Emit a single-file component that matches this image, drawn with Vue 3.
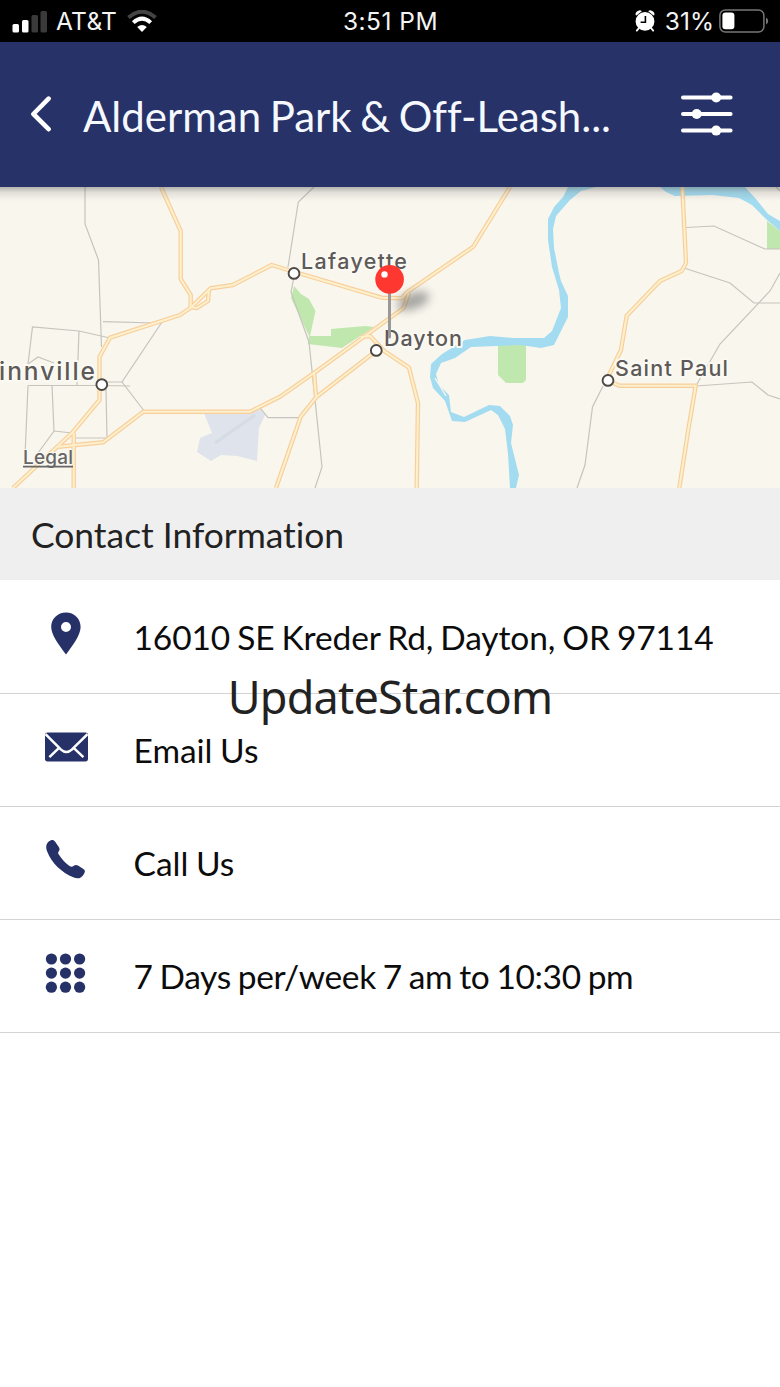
<template>
  <div class="screen">
    <div class="status-bar">
      <div class="status-left">
        <svg class="signal" viewBox="0 0 36 24" width="36" height="24">
          <rect x="0.5" y="15" width="6.5" height="8.5" rx="1.6" fill="#fff" />
          <rect x="10" y="11" width="6.5" height="12.5" rx="1.6" fill="#fff" />
          <rect x="19.5" y="6" width="6.5" height="17.5" rx="1.6" fill="#3a3a3a" />
          <rect x="28.5" y="2" width="6.5" height="21.5" rx="1.6" fill="#3a3a3a" />
        </svg>
        <span class="carrier">AT&amp;T</span>
        <svg class="wifi" viewBox="0 0 30 22" width="30" height="22" fill="none">
          <path d="M1.5 7.6 Q15 -4.2 28.5 7.6" stroke="#444" stroke-width="4" />
          <path d="M6.3 12.6 Q15 4.6 23.7 12.6" stroke="#fff" stroke-width="4" />
          <path d="M10.2 17 Q15 12.8 19.8 17 L15 22 Z" fill="#fff" />
        </svg>
      </div>
      <span class="time">3:51 PM</span>
      <div class="status-right">
        <svg class="alarm" viewBox="0 0 20 22" width="20" height="22">
          <path d="M0.6 5 Q0 1.5 4 0.4 Q6 0.2 6.8 1.2 L1.4 5.6 Z M19.4 5 Q20 1.5 16 0.4 Q14 0.2 13.2 1.2 L18.6 5.6 Z" fill="#fff" />
          <path d="M4 18 L1.8 20.6 M16 18 L18.2 20.6" stroke="#fff" stroke-width="1.8" stroke-linecap="round" />
          <circle cx="10" cy="11.4" r="9.4" fill="#fff" />
          <path d="M10.4 6 V12.2 H5.6" fill="none" stroke="#000" stroke-width="1.6" />
        </svg>
        <span class="percent">31%</span>
        <svg class="battery" viewBox="0 0 50 24" width="50" height="24">
          <rect x="0.9" y="0.9" width="44" height="22.2" rx="5.5" fill="none" stroke="#777" stroke-width="1.5" />
          <rect x="3.4" y="3.6" width="12" height="16.6" rx="3" fill="#fff" />
          <path d="M47 8.4 Q49.2 9.4 49.2 12 Q49.2 14.6 47 15.6 Z" fill="#777" />
        </svg>
      </div>
    </div>

    <header class="app-header">
      <svg class="back" viewBox="0 0 22 36" width="22" height="36">
        <path d="M18.6 2.6 L3.4 18 L18.6 33.2" fill="none" stroke="#fff" stroke-width="4.6" stroke-linecap="round" stroke-linejoin="round" />
      </svg>
      <h1 class="title">Alderman Park &amp; Off-Leash...</h1>
      <svg class="filters" viewBox="0 0 52 44" width="52" height="44">
        <g stroke="#fff" stroke-width="4" stroke-linecap="round">
          <path d="M2 5.5 H49.6 M2 22 H49.6 M2 38.6 H49.6" />
        </g>
        <g fill="#fff">
          <circle cx="35.2" cy="5.5" r="5" />
          <circle cx="15.7" cy="22" r="5" />
          <circle cx="35.2" cy="38.6" r="5" />
        </g>
      </svg>
    </header>

    <svg class="map" viewBox="0 0 780 301" width="780" height="301">
      <defs>
        <linearGradient id="headerShade" x1="0" y1="0" x2="0" y2="1">
          <stop offset="0" stop-color="#555" stop-opacity="0.42" />
          <stop offset="0.4" stop-color="#555" stop-opacity="0.14" />
          <stop offset="1" stop-color="#555" stop-opacity="0" />
        </linearGradient>
        <filter id="soft" x="-50%" y="-50%" width="200%" height="200%">
          <feGaussianBlur stdDeviation="5" />
        </filter>
      </defs>
      <rect width="780" height="301" fill="#f9f6ee" />

      <!-- airfield -->
      <path d="M204 226 L244 227 L258 221 L265 228 L259 241 L257 274 L237 269 L221 268 L211 274 L197 265 L200 251 L212 246 Z" fill="#dfe3eb" />
      <path d="M215 256 L255 228" stroke="#d6dce5" stroke-width="3" />

      <path v-for="d in parks" :key="d" :d="d" fill="#c0e7ae" />
      <path v-for="d in rivers" :key="d" :d="d" fill="#a3dcf0" />
      <path d="M435 191 L440 199 L446 209" fill="none" stroke="#f9f6ee" stroke-width="1.4" />

      <g fill="none" stroke="#c6c4be" stroke-width="1.2">
        <path v-for="d in lanes" :key="d" :d="d" />
      </g>
      <g fill="none" stroke="#f8cf9c" stroke-width="4.4" stroke-linejoin="round">
        <path v-for="d in roads" :key="d" :d="d" />
      </g>
      <g fill="none" stroke="#fdf0cc" stroke-width="2" stroke-linejoin="round">
        <path v-for="d in roads" :key="d" :d="d" />
      </g>

      <g v-for="t in towns" :key="t.name">
        <circle :cx="t.cx" :cy="t.cy" r="5.4" fill="#fff" stroke="#4c4846" stroke-width="1.9" />
        <text class="town" :class="{ large: t.large }" :x="t.x" :y="t.y" :textLength="t.w">{{ t.name }}</text>
      </g>
      <text class="legal" x="23" y="277" textLength="50">Legal</text>
      <path d="M23 279.6 H73" stroke="#666" stroke-width="1.6" />

      <!-- pin -->
      <ellipse cx="413" cy="114" rx="17" ry="8" transform="rotate(-20 413 114)" fill="#555" opacity="0.5" filter="url(#soft)" />
      <path d="M389.5 104 V150" stroke="#999" stroke-width="3" stroke-linecap="round" />
      <circle cx="389.6" cy="92.4" r="14.3" fill="#fe3830" />
      <circle cx="384.5" cy="87.4" r="3.2" fill="#fff" />

      <rect width="780" height="14" fill="url(#headerShade)" />
    </svg>

    <h2 class="section-title">Contact Information</h2>

    <ul class="contact-list">
      <li v-for="item in contacts" :key="item.icon" class="contact-row">
        <svg class="row-icon" viewBox="0 0 44 44" width="44" height="44">
          <template v-if="item.icon === 'pin'">
            <path fill-rule="evenodd" d="M22 0.5 C13.6 0.5 7.2 6.8 7.2 15 C7.2 23 15 33 22 42.5 C29 33 36.6 23 36.6 15 C36.6 6.8 30.4 0.5 22 0.5 Z M22 10 A5 5 0 1 1 22 20 A5 5 0 1 1 22 10 Z" fill="#263168" />
          </template>
          <template v-else-if="item.icon === 'mail'">
            <rect x="1" y="7.4" width="43" height="29" rx="2.6" fill="#263168" />
            <path d="M1.5 9.2 L17 24.6 Q22.4 29.4 27.8 24.6 L43.5 9.2 M15 22.8 L5.4 32.2 M29.6 22.8 L39.4 32.2" fill="none" stroke="#fff" stroke-width="2.5" />
          </template>
          <template v-else-if="item.icon === 'phone'">
            <path d="M6.5 2.4 C8.6 1.6 9.8 2 11 3.6 L14.6 8.8 C15.8 10.6 15.9 11.8 14.8 13.2 C13.8 14.5 14 15.2 14.8 16.5 C17.8 21.3 21 24.8 25.5 28 C27 29 28.2 29 29.5 28 C31 26.8 32.4 26.7 34 27.6 L39.4 31 C41.2 32.2 41.3 33.4 40.2 35.4 C37.6 40 34.4 41.4 29.8 39.6 C17.4 34.6 7.6 25 3.2 13.6 C1.2 8.4 2.4 4.2 6.5 2.4 Z" fill="#263168" />
          </template>
          <template v-else>
            <circle v-for="n in 9" :key="n" :cx="7.4 + ((n - 1) % 3) * 14.1" :cy="8 + Math.floor((n - 1) / 3) * 14.1" r="5.6" fill="#263168" />
          </template>
        </svg>
        <span class="row-text" :class="item.icon">{{ item.text }}</span>
      </li>
    </ul>

    <div class="watermark">UpdateStar.com</div>
  </div>
</template>

<script setup>
const contacts = [
  { icon: "pin", text: "16010 SE Kreder Rd, Dayton, OR 97114" },
  { icon: "mail", text: "Email Us" },
  { icon: "phone", text: "Call Us" },
  { icon: "hours", text: "7 Days per/week 7 am to 10:30 pm" },
];

const towns = [
  { name: "Lafayette", cx: 294, cy: 86.4, x: 301, y: 82, w: 106 },
  { name: "Dayton", cx: 376.3, cy: 163.4, x: 384, y: 159, w: 78 },
  { name: "Saint Paul", cx: 608, cy: 193.4, x: 615, y: 189, w: 113 },
  { name: "innville", cx: 101.8, cy: 197.6, x: -1, y: 193, w: 96, large: true },
];

// highways
const roads = [
  "M161 0 L180.7 44 V92 L190.7 108 V120",
  "M209 102 L208 114 L197 121 L190.7 120",
  "M13 301 L71.7 246.3 L99.5 213 V169.7 L110 150.7 L180 128 L190.7 120.7 L210.7 101.3 L233 98 L271.7 78 L288 83 L381.7 110.7 L401.7 111.3 L407 105.3 L473.3 59.7 L510 0",
  "M409 106 L403.3 121.3 L315 185.3 L280 209.7 L250 224.7 H143.3 L103.3 255.3 L58.3 259.7",
  "M361 150 L370 149 L385 164.7 L409 180.7 L418 216.3 L416.7 301",
  "M375 164.7 L316.7 209.7 L300.7 229.7 L276 301",
  "M314 185.3 L316 209.7",
  "M73.7 246 V301",
  "M682.3 0 L686 76.3 L681.7 84 L660 94 L626.7 128.7 L621 163 L608 190",
  "M608 193.7 L619.3 198.7 H695.7 L688 244.7 L679.3 301",
];

// local roads
const lanes = [
  "M85 0 V37 L98.5 73 L101.5 160",
  "M103 134.7 L155 136 M162 135 L122 195 L145 225",
  "M28 177 L32.5 140 L79 144 L110 151 M79 144 L77 198",
  "M28 177 L38 170 L54 176",
  "M28 198.5 H101 L130 199 M108 195 H122",
  "M28 198.5 L25 269 M52 198.5 L54 244 L38 266 M54 244 L72 246",
  "M106 202 L107 251 H75",
  "M314 0 L298.3 15 L288 80 M294 90 L291 105 L309 155 L322 280 L315 301",
  "M260 221 L268 230.6 H300",
  "M686 40.5 L714 39 L765 62 H780",
  "M684 81 L730 96 L754 116 H780 M780 86 L770 104 L720 157 L697 197",
  "M696 199 L752 195 L768 208 L780 212",
  "M603 199 L592.5 220 L585 278 L577 301",
  "M776 0 L780 4",
];

const parks = [
  "M294 99 L301 107 L309 112 L315.5 124 L310 149 L331 149 V142 L365 139 L374 140 L342 161 L308 157 L309 149 L291 111 Z",
  "M498 157 H526 V193 L523 196 H506 L498 188 Z",
  "M767 34 L780 44 V62 H767 Z",
];

const rivers = [
  "M568 0 H596 L581 4 L570 13 L556 29 L553 42 L554 61 L559 86 L561 94 L568 109 V130 L554 158 L541 161 L520 158 L471 160 L455 171 L441 176 L436 187 L439 198 L449 208 L451 225 L464 230 L489 218 L500 219 L510 229 L513 238 L511 256 L519 288 L516 301 H510 L508 267 L505 242 L498 228 L491 223 L465 235 L452 234 L445 214 L433 201 L430 190 L431 177 L442 167 L465 153 L490 149 L514 151 L544 151 L552 144 L561 121 L559 103 L552 80 L548 53 L548 32 L554 20 L563 10 Z",
  "M660 0 H745 L756 12 L768 27 L780 34 V44 L767 33 L752 18 L739 11 L713 8 L675 9 L666 5 Z",
];
</script>

<style scoped>
.screen {
  position: relative;
  display: flex;
  flex-direction: column;
  width: 780px;
  height: 1387px;
  overflow: hidden;
  background: #fff;
  font-family: Lato, sans-serif;
  font-variant-ligatures: none;
}

.status-bar {
  display: grid;
  grid-template-columns: 1fr auto 1fr;
  align-items: center;
  flex: none;
  height: 42px;
  padding: 0 11px 1px 12px;
  box-sizing: border-box;
  background: #000;
  color: #f4f4f4;
  font-family: Inter, sans-serif;
  font-size: 24.5px;
  line-height: 40px;
}

.status-left,
.status-right {
  display: flex;
  align-items: center;
}

.status-right {
  justify-content: flex-end;
}

.carrier {
  margin-left: 8px;
  letter-spacing: 0.3px;
}

.time {
  letter-spacing: 0.5px;
}

.wifi {
  margin-left: 10px;
}

.percent {
  margin: 0 5px 0 10px;
}

.app-header {
  display: flex;
  align-items: center;
  flex: none;
  height: 145px;
  padding: 0 47px 1px 30px;
  box-sizing: border-box;
  background: #273268;
}

.title {
  flex: 1;
  margin: 3px 0 0 31px;
  color: #f5f9ff;
  font-size: 42px;
  font-weight: 400;
  line-height: 50px;
  word-spacing: -2.2px;
  white-space: nowrap;
}

.map {
  display: block;
  flex: none;
}

.town,
.legal {
  fill: #5d5a58;
  stroke: #fbf9f3;
  stroke-width: 4px;
  stroke-linejoin: round;
  paint-order: stroke;
  font-family: Inter, sans-serif;
  font-size: 21.5px;
  font-weight: 500;
}

.town.large {
  font-size: 24.5px;
}

.legal {
  fill: #666;
  stroke-width: 2px;
  font-size: 19px;
}

.section-title {
  flex: none;
  height: 92px;
  margin: 0;
  padding: 1px 32px 0 31px;
  box-sizing: border-box;
  background: #efefef;
  color: #222;
  font-size: 35.4px;
  font-weight: 400;
  line-height: 92px;
}

.contact-list {
  margin: 1px 0 0;
  padding: 0;
  list-style: none;
}

.contact-row {
  display: flex;
  align-items: center;
  height: 113.1px;
  padding: 0 44px 6px;
  box-sizing: border-box;
  border-bottom: 1.5px solid #d3d3d3;
}

.row-text {
  margin: 6px 0 0 45.5px;
  color: #0c0c0c;
  font-size: 33.5px;
  line-height: 44px;
  word-spacing: -1px;
  white-space: nowrap;
}

.row-text.pin {
  letter-spacing: -0.1px;
  word-spacing: -1.5px;
}

.row-text.hours {
  letter-spacing: -0.35px;
  word-spacing: -1.3px;
}

.watermark {
  position: absolute;
  top: 665px;
  left: 0;
  width: 780px;
  color: #222;
  font-family: "Noto Sans", sans-serif;
  font-size: 45px;
  line-height: 64px;
  letter-spacing: -0.8px;
  text-align: center;
}
</style>

<style>
body {
  margin: 0;
  background: #fff;
}
</style>
